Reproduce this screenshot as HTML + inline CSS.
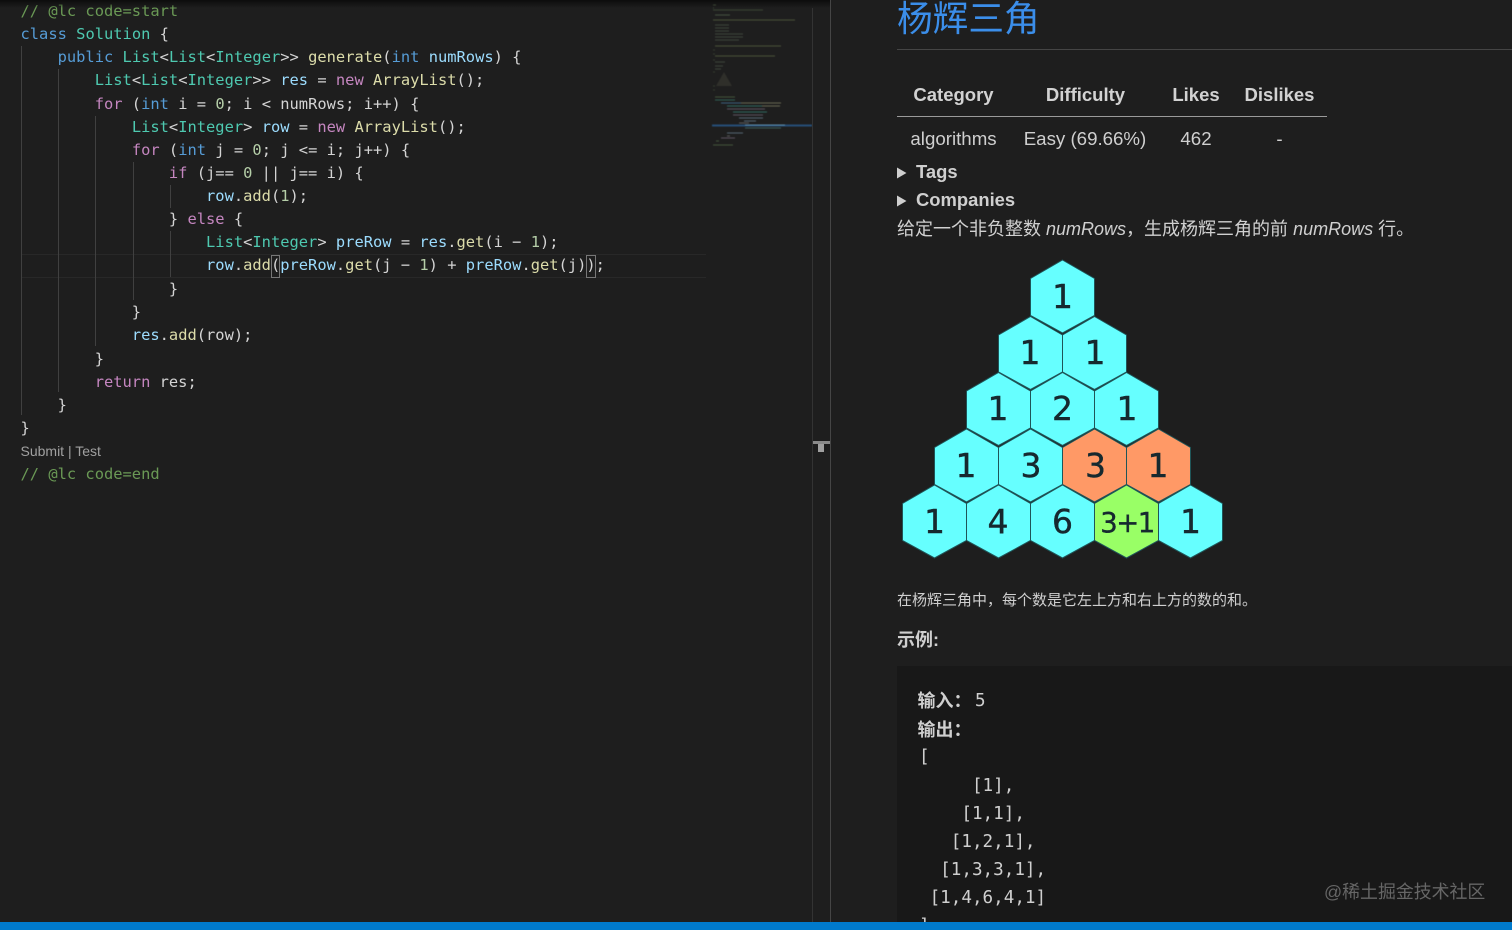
<!DOCTYPE html>
<html lang="zh">
<head>
<meta charset="utf-8">
<title>杨辉三角</title>
<style>
html,body{margin:0;padding:0;background:#1e1e1e;width:1512px;height:930px;overflow:hidden}
#wrap{position:relative;width:1512px;height:930px;overflow:hidden;font-family:"Liberation Sans","Noto Sans CJK SC",sans-serif;color:#d0d0d0}
.abs{position:absolute;white-space:nowrap}
pre{margin:0}
#code{position:absolute;left:20.5px;top:0.2px;font:15.42px/23.1px "DejaVu Sans Mono","Liberation Mono",monospace;color:#d4d4d4;white-space:pre}
.k{color:#569cd6}.t{color:#4ec9b0}.f{color:#dcdcaa}.v{color:#9cdcfe}.c{color:#c586c0}.n{color:#b5cea8}.g{color:#6a9955}
.br{outline:1px solid #777;outline-offset:-1px;display:inline-block;line-height:21px;height:23px}
.guide{position:absolute;width:1px;background:#404040}
.th{font-weight:bold;font-size:18.5px;line-height:24px;transform:translateX(-50%);color:#d2d2d2}
.td{font-size:18.7px;line-height:24px;transform:translateX(-50%);color:#cfcfcf}
.o{position:absolute;font:17.6px/28px "DejaVu Sans Mono","Liberation Mono",monospace;color:#cfcfcf;white-space:pre}
.cj{position:absolute;font:bold 18px/28px "Noto Sans CJK SC",sans-serif;color:#cfcfcf;white-space:pre}
</style>
</head>
<body>
<div id="wrap">
<!-- current line -->
<div class="abs" style="left:21px;top:254px;width:685px;height:22px;border-top:1px solid #282828;border-bottom:1px solid #282828"></div>
<!-- indent guides -->
<div class="guide" style="left:21px;top:46px;height:369px"></div>
<div class="guide" style="left:58px;top:69px;height:323px"></div>
<div class="guide" style="left:95px;top:116px;height:230px"></div>
<div class="guide" style="left:133px;top:162px;height:138px"></div>
<div class="guide" style="left:170px;top:185px;height:23px"></div>
<div class="guide" style="left:170px;top:231px;height:46px"></div>

<pre id="code"><span class="g">// @lc code=start</span>
<span class="k">class</span> <span class="t">Solution</span> {
    <span class="k">public</span> <span class="t">List</span>&lt;<span class="t">List</span>&lt;<span class="t">Integer</span>&gt;&gt; <span class="f">generate</span>(<span class="k">int</span> <span class="v">numRows</span>) {
        <span class="t">List</span>&lt;<span class="t">List</span>&lt;<span class="t">Integer</span>&gt;&gt; <span class="v">res</span> = <span class="c">new</span> <span class="f">ArrayList</span>();
        <span class="c">for</span> (<span class="k">int</span> i = <span class="n">0</span>; i &lt; numRows; i++) {
            <span class="t">List</span>&lt;<span class="t">Integer</span>&gt; <span class="v">row</span> = <span class="c">new</span> <span class="f">ArrayList</span>();
            <span class="c">for</span> (<span class="k">int</span> j = <span class="n">0</span>; j &lt;= i; j++) {
                <span class="c">if</span> (j== <span class="n">0</span> || j== i) {
                    <span class="v">row</span>.<span class="f">add</span>(<span class="n">1</span>);
                } <span class="c">else</span> {
                    <span class="t">List</span>&lt;<span class="t">Integer</span>&gt; <span class="v">preRow</span> = <span class="v">res</span>.<span class="f">get</span>(i − <span class="n">1</span>);
                    <span class="v">row</span>.<span class="f">add</span><span class="br">(</span><span class="v">preRow</span>.<span class="f">get</span>(j − <span class="n">1</span>) + <span class="v">preRow</span>.<span class="f">get</span>(j)<span class="br">)</span>;
                }
            }
            <span class="v">res</span>.<span class="f">add</span>(row);
        }
        <span class="c">return</span> res;
    }
}

<span class="g">// @lc code=end</span></pre>
<div class="abs" style="left:20.5px;top:443px;font-size:14px;line-height:17px;color:#a0a0a0">Submit | Test</div>

<!-- editor top shadow -->
<div class="abs" style="left:0;top:0;width:830px;height:8px;background:linear-gradient(#0c0c0c,rgba(12,12,12,0))"></div>

<!-- minimap -->
<svg class="abs" style="left:705px;top:0;filter:blur(.5px)" width="110" height="160" viewBox="0 0 110 160">
<g stroke-width="1" fill="none" opacity=".7">
<path d="M8 5h3M8 8h1M8 10h50" stroke="#4a5a42"/>
<path d="M10 15h15" stroke="#5a6a52"/>
<path d="M8 20h82" stroke="#5f6b45"/>
<path d="M10 25h14M10 28h14M10 31h14M10 34h28M10 37h28M10 40h24" stroke="#4f5a4a"/>
<path d="M10 46h66" stroke="#5f6b45"/>
<path d="M10 56h60" stroke="#5f6b45"/>
<path d="M10 62h10M10 66h8M10 69h6" stroke="#4f5a4a"/>
<path d="M8 50h2M8 54h2M8 60h2M8 72h2M8 86h2M8 90h2" stroke="#3f4a3a"/>
<path d="M10 97h20" stroke="#56704a"/>
<path d="M10 100h20" stroke="#3d7c70"/>
<path d="M16 103h20" stroke="#4a7fa8"/><path d="M36 103h40" stroke="#8a8a6a"/>
<path d="M22 106h35" stroke="#3d8c80"/><path d="M57 106h18" stroke="#8a8a6a"/>
<path d="M22 109h38" stroke="#7a6a80"/>
<path d="M28 112h34" stroke="#3d8c80"/>
<path d="M28 115h30" stroke="#7a6a80"/>
<path d="M34 118h24" stroke="#70889a"/>
<path d="M39 121h12" stroke="#70889a"/>
<path d="M34 123h10" stroke="#777"/>
<path d="M40 128h36" stroke="#4a7a78"/>
<path d="M28 133h3M22 136h3" stroke="#777"/>
<path d="M22 133h16" stroke="#70889a"/>
<path d="M16 138h14" stroke="#7a6a80"/>
<path d="M11 141h3M8 145h20" stroke="#56704a"/>
</g>
<rect x="7" y="124.500" width="100" height="2" fill="#264f78"/>
<path d="M40 125h40" stroke="#5f8fb0" stroke-width="1"/>
<path d="M19 72l-8 14h16z" fill="#5a5a4a" opacity=".3"/>
</svg>

<!-- dividers -->
<div class="abs" style="left:812px;top:8px;width:1px;height:914px;background:#333"></div>
<div class="abs" style="left:830px;top:0;width:1px;height:922px;background:#454545"></div>
<!-- sash handle -->
<div class="abs" style="left:813px;top:441px;width:17px;height:3px;background:#8a8a8a"></div>
<div class="abs" style="left:818px;top:444px;width:6px;height:8px;background:#a0a0a0"></div>

<!-- right panel -->
<div class="abs" style="left:897px;top:-5.500px;font-size:35.7px;line-height:48px;color:#3b8eea">杨辉三角</div>
<div class="abs" style="left:897px;top:49px;width:615px;height:1px;background:#454545"></div>

<div class="abs th" style="left:953.500px;top:83px">Category</div>
<div class="abs th" style="left:1085.500px;top:83px">Difficulty</div>
<div class="abs th" style="left:1196px;top:83px">Likes</div>
<div class="abs th" style="left:1279.500px;top:83px">Dislikes</div>
<div class="abs" style="left:897px;top:115.500px;width:430px;height:1.500px;background:#9a9a9a"></div>
<div class="abs td" style="left:953.500px;top:126.500px">algorithms</div>
<div class="abs td" style="left:1085px;top:126.500px">Easy (69.66%)</div>
<div class="abs td" style="left:1196px;top:126.500px">462</div>
<div class="abs td" style="left:1279.500px;top:126.500px">-</div>

<svg class="abs" style="left:897px;top:166px" width="10" height="42"><path d="M0 1.500l9.500 5.500L0 12.500zM0 29.500l9.500 5.500L0 40.500z" fill="#cfcfcf"/></svg>
<div class="abs" style="left:916px;top:160px;font-size:18.4px;line-height:24px;font-weight:bold;color:#cfcfcf">Tags</div>
<div class="abs" style="left:916px;top:188px;font-size:18.4px;line-height:24px;font-weight:bold;color:#cfcfcf">Companies</div>
<div class="abs" style="left:897px;top:216px;font-size:18px;line-height:26px;color:#d0d0d0">给定一个非负整数 <i>numRows</i>，生成杨辉三角的前 <i>numRows</i> 行。</div>

<!-- triangle -->
<svg class="abs" style="left:890px;top:250px" width="345" height="320" viewBox="890 250 345 320">
<defs>
<path id="h" d="M0-36.500L32-18V19L0 36.500L-32 19V-18z" stroke="#1f5558" stroke-width="1"/>
</defs>
<g fill="#66ffff">
<use href="#h" x="1062.500" y="296.500"/>
<use href="#h" x="1030.500" y="353"/><use href="#h" x="1094.500" y="353"/>
<use href="#h" x="998.500" y="409"/><use href="#h" x="1062.500" y="409"/><use href="#h" x="1126.500" y="409"/>
<use href="#h" x="966.500" y="465.500"/><use href="#h" x="1030.500" y="465.500"/>
<use href="#h" x="1094.500" y="465.500" fill="#ff9966"/><use href="#h" x="1158.500" y="465.500" fill="#ff9966"/>
<use href="#h" x="934.500" y="521.500"/><use href="#h" x="998.500" y="521.500"/><use href="#h" x="1062.500" y="521.500"/>
<use href="#h" x="1126.500" y="521.500" fill="#99ff66"/><use href="#h" x="1190.500" y="521.500"/>
</g>
<g font-family="'DejaVu Sans',sans-serif" font-size="33" fill="#16292f" stroke="#16292f" stroke-width=".4" text-anchor="middle">
<text x="1062.500" y="308">1</text>
<text x="1030" y="364">1</text><text x="1095" y="364">1</text>
<text x="998" y="420">1</text><text x="1062.500" y="420">2</text><text x="1127" y="420">1</text>
<text x="966" y="477">1</text><text x="1031" y="477">3</text><text x="1095.500" y="477">3</text><text x="1158" y="477">1</text>
<text x="934.500" y="533">1</text><text x="998" y="533">4</text><text x="1062.500" y="533">6</text>
<text x="1127" y="532" font-size="27.500" letter-spacing="-1.500">3+1</text><text x="1190.500" y="533">1</text>
</g>
</svg>

<div class="abs" style="left:897px;top:590px;font-size:15px;line-height:22px;color:#cfcfcf">在杨辉三角中，每个数是它左上方和右上方的数的和。</div>
<div class="abs" style="left:897px;top:627px;font-size:18px;line-height:26px;font-weight:bold;color:#cfcfcf">示例:</div>

<!-- code block -->
<div class="abs" style="left:897px;top:666px;width:615px;height:256px;background:#181818"></div>
<div class="cj" style="left:917.500px;top:686px">输入：</div>
<div class="o" style="left:975px;top:686.500px">5</div>
<div class="cj" style="left:917.500px;top:714.500px">输出：</div>
<div class="o" style="left:919px;top:743px">[</div>
<div class="o" style="left:919px;top:771.500px">     [1],</div>
<div class="o" style="left:919px;top:799.500px">    [1,1],</div>
<div class="o" style="left:919px;top:827.500px">   [1,2,1],</div>
<div class="o" style="left:919px;top:855.500px">  [1,3,3,1],</div>
<div class="o" style="left:919px;top:884px"> [1,4,6,4,1]</div>
<div class="o" style="left:919px;top:912px">]</div>

<div class="abs" style="left:1324px;top:880px;font-size:17.900px;line-height:25px;color:#666">@稀土掘金技术社区</div>

<!-- status bar -->
<div class="abs" style="left:0;top:922px;width:1512px;height:8px;background:#007acc"></div>
</div>
</body>
</html>
